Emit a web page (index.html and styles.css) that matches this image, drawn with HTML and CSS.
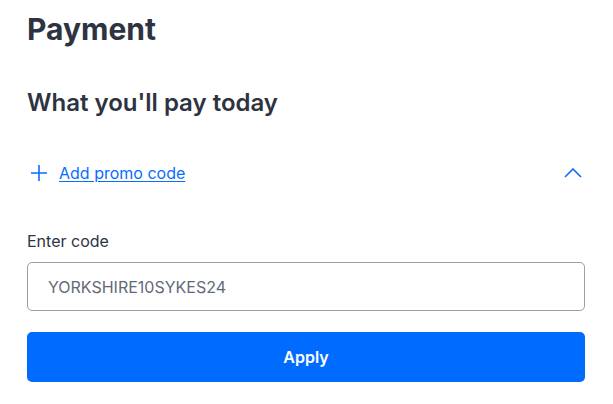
FILE: index.html
```html
<!DOCTYPE html>
<html lang="en">
<head>
  <meta charset="UTF-8">
  <meta name="viewport" content="width=device-width, initial-scale=1.0">
  <link rel="stylesheet" href="styles.css">
  <title>Payment</title>
</head>
<body>
  <main class="payment">
    <h1 class="payment__title">Payment</h1>
    <h2 class="payment__subtitle">What you'll pay today</h2>

    <div class="promo">
      <div class="promo__toggle">
        <svg class="promo__plus" width="16" height="16" viewBox="0 0 16 16" fill="none" stroke="currentColor" stroke-width="1.6">
          <path d="M8 0v16M0 8h16"/>
        </svg>
        <a class="promo__link" href="#">Add promo code</a>
        <svg class="promo__chevron" width="18" height="10" viewBox="0 0 18 10" fill="none" stroke="currentColor" stroke-width="1.6">
          <path d="M1 9l8-8 8 8"/>
        </svg>
      </div>

      <label class="promo__label" for="code">Enter code</label>
      <input class="promo__input" id="code" type="text" value="YORKSHIRE10SYKES24">
      <button class="promo__button">Apply</button>
    </div>
  </main>
</body>
</html>
```

FILE: styles.css
```css
body {
  margin: 0;
  font-family: Inter, "Liberation Sans", sans-serif;
  color: #2d3340;
  background: #fff;
}

.payment {
  padding: 0 28px 0 27px;
}

.payment__title {
  margin: 0;
  padding-top: 11px;
  font-size: 30px;
  font-weight: 700;
  line-height: 36px;
}

.payment__subtitle {
  margin: 41px 0 0;
  font-size: 24px;
  font-weight: 600;
  line-height: 30px;
}

.promo__toggle {
  display: flex;
  align-items: center;
  margin-top: 43px;
  height: 24px;
  color: #0a6cff;
}

.promo__plus {
  margin: 0 12px 0 4px;
}

.promo__link {
  color: #0a6cff;
  font-size: 16px;
  text-underline-offset: 2px;
}

.promo__chevron {
  margin-left: auto;
  margin-right: 3px;
}

.promo__label {
  display: block;
  margin-top: 46px;
  font-size: 16px;
  line-height: 20px;
  color: #2d3340;
}

.promo__input {
  display: block;
  box-sizing: border-box;
  width: 100%;
  height: 49px;
  margin-top: 11px;
  padding: 0 20px;
  border: 1px solid #9aa0ab;
  border-radius: 5px;
  font-family: inherit;
  font-size: 16px;
  color: #626a78;
}

.promo__button {
  display: block;
  width: 100%;
  height: 50px;
  margin-top: 21px;
  border: 0;
  border-radius: 5px;
  background: #006cff;
  color: #fff;
  font-family: inherit;
  font-size: 16px;
  font-weight: 600;
}
```
